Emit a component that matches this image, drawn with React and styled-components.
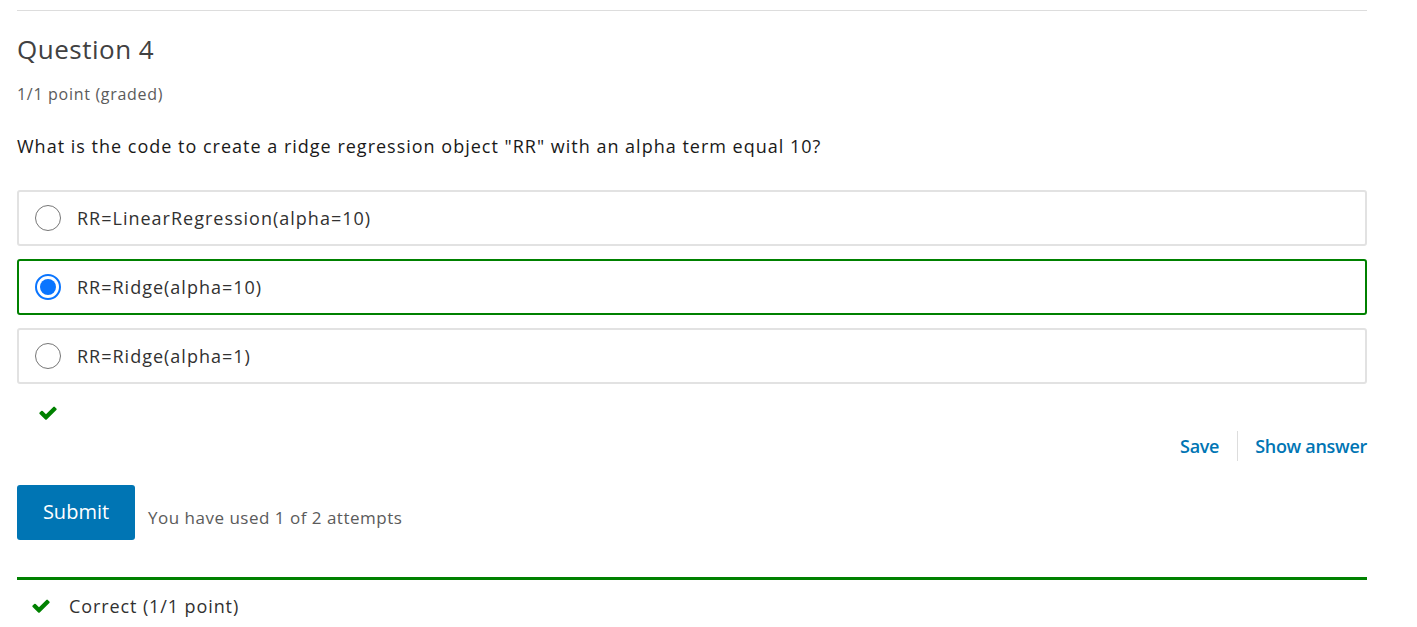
import styled, { createGlobalStyle } from "styled-components";

const GlobalStyle = createGlobalStyle`
  body {
    margin: 0;
    background: #fff;
    font-family: "Open Sans", "Noto Sans", sans-serif;
    color: #313131;
  }
`;

const Container = styled.div`
  width: 1350px;
  padding: 10px 17px 0;
`;

const TopRule = styled.div`
  border-top: 1px solid #dddddd;
`;

const Heading = styled.h3`
  margin: 22px 0 0;
  font-size: 26px;
  font-weight: 400;
  line-height: 32px;
  letter-spacing: 0.5px;
  color: #414141;
`;

const Points = styled.div`
  margin-top: 17px;
  font-size: 16px;
  line-height: 24px;
  letter-spacing: 0.7px;
  color: #5b5b5b;
`;

const Prompt = styled.p`
  margin: 27px 0 0;
  font-size: 18px;
  line-height: 27px;
  letter-spacing: 1px;
  color: #191919;
`;

const Choices = styled.div`
  margin-top: 30px;
  display: flex;
  flex-direction: column;
  gap: 13px;
`;

const Choice = styled.label`
  display: flex;
  align-items: center;
  height: 56px;
  box-sizing: border-box;
  border: 2px solid ${(p) => (p.$correct ? "#008100" : "#e2e2e2")};
  border-radius: 3px;
  padding-left: 16px;
  font-size: 18px;
  letter-spacing: 1px;
  color: #313131;
`;

const Radio = styled.span`
  width: 26px;
  height: 26px;
  box-sizing: border-box;
  border-radius: 50%;
  border: ${(p) => (p.$checked ? "2px solid #0a75ff" : "1.5px solid #767676")};
  margin-right: 16px;
  display: flex;
  align-items: center;
  justify-content: center;
  &::after {
    content: "";
    display: ${(p) => (p.$checked ? "block" : "none")};
    width: 16px;
    height: 16px;
    border-radius: 50%;
    background: #0a75ff;
  }
`;

const CheckRow = styled.div`
  margin-top: 22px;
  padding-left: 21px;
  height: 16px;
  display: flex;
  align-items: center;
`;

const Actions = styled.div`
  margin-top: 9px;
  display: flex;
  justify-content: flex-end;
  align-items: center;
  height: 30px;
`;

const ActionLink = styled.a`
  font-size: 18px;
  font-weight: 600;
  letter-spacing: -0.3px;
  color: #0075b4;
  text-decoration: none;
  padding: 0 ${(p) => (p.$last ? "0" : "18px")} 0 ${(p) => (p.$first ? "0" : "17px")};
  border-left: ${(p) => (p.$first ? "none" : "1px solid #dddddd")};
  line-height: 30px;
`;

const SubmitRow = styled.div`
  margin-top: 24px;
  display: flex;
  align-items: flex-end;
  gap: 13px;
`;

const SubmitButton = styled.button`
  width: 118px;
  height: 55px;
  border: none;
  border-radius: 3px;
  background: #0075b4;
  color: #fff;
  font-family: "Open Sans", sans-serif;
  font-size: 20px;
  padding: 0 0 2px;
  line-height: 1;
  align-self: flex-start;
`;

const Attempts = styled.span`
  font-size: 17px;
  letter-spacing: 0.5px;
  color: #5b5b5b;
  line-height: 26px;
  margin-bottom: 9px;
`;

const Feedback = styled.div`
  margin-top: 37px;
  border-top: 3px solid #008100;
  display: flex;
  align-items: center;
  padding: 13px 0 0 14px;
  gap: 18px;
  font-size: 18px;
  letter-spacing: 0.9px;
  line-height: 27px;
  color: #313131;
`;

const Check = () => (
  <svg width="20" height="16" viewBox="0 0 1792 1408">
    <path
      fill="#008100"
      d="M1671 274q0 40-28 68l-724 724-136 136q-28 28-68 28t-68-28l-136-136-362-362q-28-28-28-68t28-68l136-136q28-28 68-28t68 28l294 295 656-657q28-28 68-28t68 28l136 136q28 28 28 68z"
    />
  </svg>
);

const options = [
  { label: "RR=LinearRegression(alpha=10)" },
  { label: "RR=Ridge(alpha=10)", checked: true },
  { label: "RR=Ridge(alpha=1)" },
];

export default function App() {
  return (
    <>
      <GlobalStyle />
      <Container>
        <TopRule />
        <Heading>Question 4</Heading>
        <Points>1/1 point (graded)</Points>
        <Prompt>
          What is the code to create a ridge regression object "RR" with an alpha term equal 10?
        </Prompt>
        <Choices>
          {options.map((o) => (
            <Choice key={o.label} $correct={o.checked}>
              <Radio $checked={o.checked} />
              {o.label}
            </Choice>
          ))}
        </Choices>
        <CheckRow>
          <Check />
        </CheckRow>
        <Actions>
          <ActionLink $first>Save</ActionLink>
          <ActionLink $last>Show answer</ActionLink>
        </Actions>
        <SubmitRow>
          <SubmitButton>Submit</SubmitButton>
          <Attempts>You have used 1 of 2 attempts</Attempts>
        </SubmitRow>
        <Feedback>
          <Check />
          Correct (1/1 point)
        </Feedback>
      </Container>
    </>
  );
}
